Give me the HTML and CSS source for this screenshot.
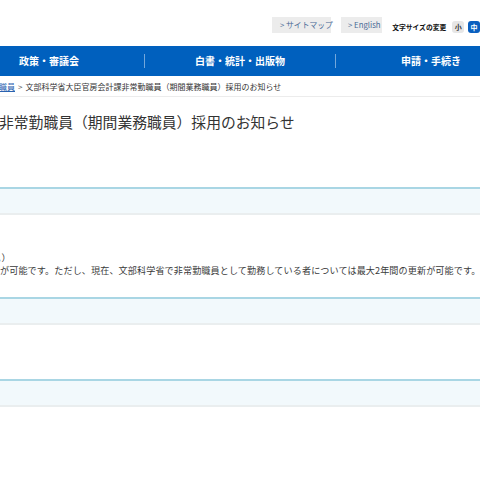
FILE: index.html
```html
<!DOCTYPE html>
<html lang="ja">
<head>
<meta charset="utf-8">
<title>採用のお知らせ</title>
<link rel="stylesheet" href="styles.css">
</head>
<body>
<div class="page">
  <header class="util">
    <a class="ubtn ubtn-site" href="#">&gt; サイトマップ</a>
    <a class="ubtn ubtn-en" href="#">&gt; English</a>
    <span class="fs-label">文字サイズの変更</span>
    <span class="fs-box fs-small">小</span>
    <span class="fs-box fs-mid">中</span>
  </header>
  <nav class="gnav">
    <a class="gitem" href="#">政策・審議会</a>
    <span class="gsep"></span>
    <a class="gitem" href="#">白書・統計・出版物</a>
    <span class="gsep"></span>
    <a class="gitem" href="#">申請・手続き</a>
  </nav>
  <div class="crumbs">
    <a class="crumb-link" href="#">職員</a><span class="crumb-sep">&gt;</span><span class="crumb-cur">文部科学省大臣官房会計課非常勤職員（期間業務職員）採用のお知らせ</span>
  </div>
  <h1 class="title">非常勤職員（期間業務職員）採用のお知らせ</h1>
  <div class="bar bar-1"></div>
  <div class="body-text">
    <p class="line line-a">。）</p>
    <p class="line line-b">が可能です。ただし、現在、文部科学省で非常勤職員として勤務している者については最大2年間の更新が可能です。</p>
  </div>
  <div class="bar bar-2"></div>
  <div class="bar bar-3"></div>
</div>
</body>
</html>
```
FILE: styles.css
```css
html, body {
  margin: 0;
  padding: 0;
  background: #ffffff;
}
body {
  width: 480px;
  height: 480px;
  overflow: hidden;
  font-family: "Noto Sans CJK JP", "Noto Sans", sans-serif;
  color: #333333;
}
.page {
  width: 480px;
}
a {
  text-decoration: none;
}

/* utility row */
.util {
  height: 46px;
  display: flex;
  align-items: flex-start;
  padding-left: 272px;
  box-sizing: border-box;
  white-space: nowrap;
}
.ubtn {
  margin-top: 17px;
  height: 16px;
  line-height: 16px;
  background: #ececec;
  color: #4a6a96;
  font-size: 7.8px;
  box-sizing: border-box;
  padding-left: 8px;
}
.ubtn-site {
  width: 59px;
}
.ubtn-en {
  width: 42px;
  margin-left: 10px;
  padding-left: 7px;
}
.fs-label {
  margin-left: 10px;
  margin-top: 22px;
  font-size: 6.8px;
  font-weight: 700;
  color: #111111;
  line-height: 10px;
}
.fs-box {
  margin-top: 21px;
  width: 12px;
  height: 12px;
  line-height: 12px;
  text-align: center;
  font-size: 7px;
  font-weight: 700;
  border-radius: 3px;
}
.fs-small {
  margin-left: 6px;
  background: #e6e6e6;
  color: #333333;
}
.fs-mid {
  margin-left: 4px;
  background: #0a5fbf;
  color: #ffffff;
  flex-shrink: 0;
}

/* global nav */
.gnav {
  height: 30px;
  background: #0060be;
  display: flex;
  align-items: center;
  margin-left: -46px;
  width: 600px;
}
.gitem {
  width: 190px;
  flex-shrink: 0;
  text-align: center;
  color: #ffffff;
  font-size: 10px;
  font-weight: 700;
  line-height: 30px;
}
.gsep {
  width: 1px;
  height: 14px;
  background: rgba(255, 255, 255, 0.45);
  flex-shrink: 0;
}

/* breadcrumbs */
.crumbs {
  height: 21px;
  line-height: 22px;
  font-size: 8px;
  white-space: nowrap;
  border-bottom: 1px solid #ececec;
  box-sizing: border-box;
  margin-left: -1px;
  color: #333333;
}
.crumb-link {
  color: #2a62b0;
  text-decoration: underline;
}
.crumb-sep {
  margin: 0 3px 0 3px;
  color: #555555;
}

/* title */
.title {
  margin: 15px 0 0 -1px;
  font-size: 14.8px;
  font-weight: 400;
  line-height: 20px;
  color: #333333;
  white-space: nowrap;
}

/* section bars */
.bar {
  height: 28px;
  box-sizing: border-box;
  background: #f2f9fc;
  border-top: 2px solid #a9d6e4;
  border-bottom: 2px solid #eaeeef;
}
.bar-1 {
  margin-top: 55px;
}
.bar-2 {
  margin-top: 0;
}
.bar-3 {
  margin-top: 54px;
}

/* body text */
.body-text {
  padding-top: 36px;
  height: 82px;
  box-sizing: border-box;
}
.line {
  margin: 0;
  font-size: 9.1px;
  line-height: 13px;
  color: #3a3a3a;
  white-space: nowrap;
}
.line-a {
  margin-left: -3px;
}
.line-b {
  margin-left: 0;
  letter-spacing: 0.1px;
}
```
